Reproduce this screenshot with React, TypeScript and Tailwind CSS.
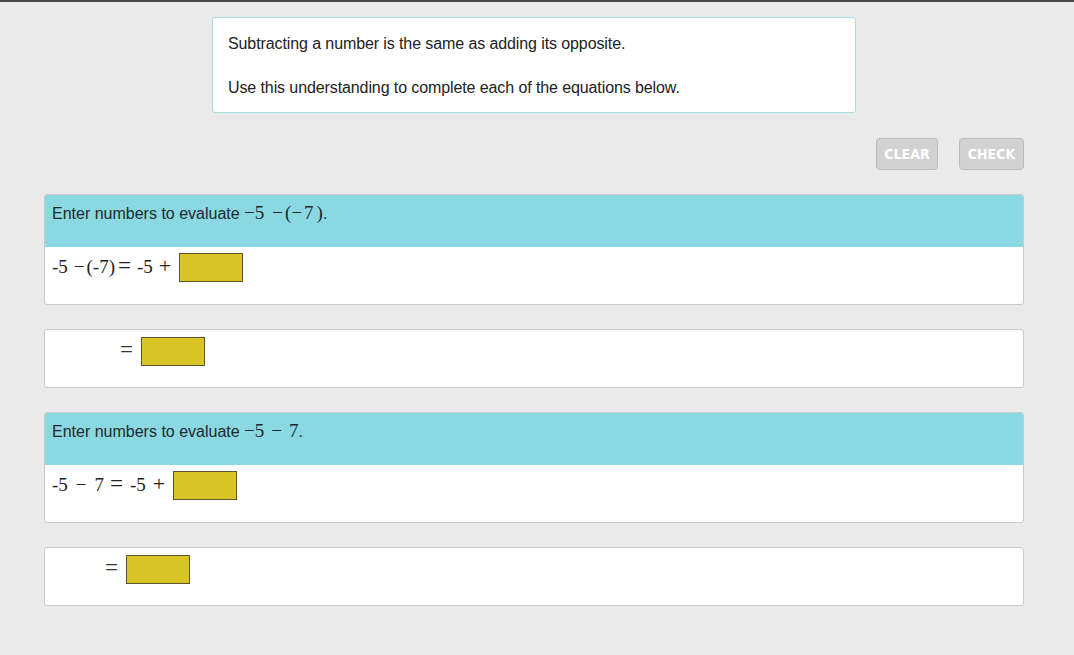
import React from 'react';

const sans = { fontFamily: '"Liberation Sans", Arial, sans-serif' };

function Blank() {
  return <div className="h-[29px] w-[64px] shrink-0 border border-[#5c5533] bg-[#d9c425]" />;
}

// math text, serif like a rendered formula
function M({ children, className = '' }: { children: React.ReactNode; className?: string }) {
  return <span className={`whitespace-nowrap font-['Liberation_Serif',serif] text-[19px] ${className}`}>{children}</span>;
}

function Eq({ className = '' }: { className?: string }) {
  return <span className={`inline-block text-[23px] leading-[20px] ${className}`}>=</span>;
}

function PromptCard({ prompt, left }: { prompt: React.ReactNode; left: React.ReactNode }) {
  return (
    <div className="overflow-hidden rounded-[3px] border border-[#c9c9c9] bg-white">
      <div className="h-[52px] bg-[#8ad8e2] px-[7px] pt-[7px] text-[16px] leading-[22px] text-[#1d2a2c]">
        Enter numbers to evaluate {prompt}.
      </div>
      <div className="flex h-[57px] items-start px-[7px] pt-[6px]">
        <div className="flex h-[29px] items-center text-[#222]">{left}</div>
        <Blank />
      </div>
    </div>
  );
}

function EqualsCard({ indent }: { indent: string }) {
  return (
    <div className={`flex h-[59px] items-start gap-[8px] rounded-[3px] border border-[#c9c9c9] bg-white pt-[7px] ${indent}`}>
      <div className="flex h-[29px] items-center text-[#333]">
        <M>
          <Eq />
        </M>
      </div>
      <Blank />
    </div>
  );
}

export default function App() {
  return (
    <div className="min-h-[655px] w-full border-t-2 border-[#4a4a4a] bg-[#eaeaea]" style={sans}>
      <div className="ml-[44px] w-[980px] pt-[15px]">
        <div className="mx-auto w-[644px] rounded-[3px] border border-[#a9dbe3] bg-white px-[15px] pb-[14px] pt-[16px] text-[16px] leading-[20px] tracking-[-0.1px] text-[#222]">
          <p>Subtracting a number is the same as adding its opposite.</p>
          <p className="mt-[24px]">Use this understanding to complete each of the equations below.</p>
        </div>

        <div className="mt-[25px] flex justify-end gap-[21px]">
          <button className="h-[32px] w-[62px] rounded-[4px] border border-[#b9b9b9] bg-[#d2d2d2] font-['DejaVu_Sans_Condensed',sans-serif] text-[14px] font-semibold text-white">
            CLEAR
          </button>
          <button className="h-[32px] w-[65px] rounded-[4px] border border-[#b9b9b9] bg-[#d2d2d2] font-['DejaVu_Sans_Condensed',sans-serif] text-[14px] font-semibold text-white">
            CHECK
          </button>
        </div>

        <div className="mt-[24px] flex flex-col gap-[24px]">
          <PromptCard
            prompt={
              <M>
                −5<span className="ml-[8px]">−</span>
                <span className="ml-[2px]">(</span>−<span className="ml-[2px]">7</span>
                <span className="ml-[3px]">)</span>
              </M>
            }
            left={
              <M>
                -5<span className="ml-[6px]">−</span>
                <span className="ml-[2px]">(-7)</span>
                <Eq className="ml-[3px]" />
                <span className="ml-[6px]">-5</span>
                <span className="ml-[6px] mr-[8px] inline-block text-[22px] leading-[20px]">+</span>
              </M>
            }
          />
          <EqualsCard indent="pl-[75px]" />
          <PromptCard
            prompt={
              <M>
                −5<span className="mx-[7px]">−</span>7
              </M>
            }
            left={
              <M>
                -5<span className="mx-[8px]">−</span>7
                <Eq className="ml-[6px]" />
                <span className="ml-[7px]">-5</span>
                <span className="ml-[7px] mr-[8px] inline-block text-[22px] leading-[20px]">+</span>
              </M>
            }
          />
          <EqualsCard indent="pl-[60px]" />
        </div>
      </div>
    </div>
  );
}
